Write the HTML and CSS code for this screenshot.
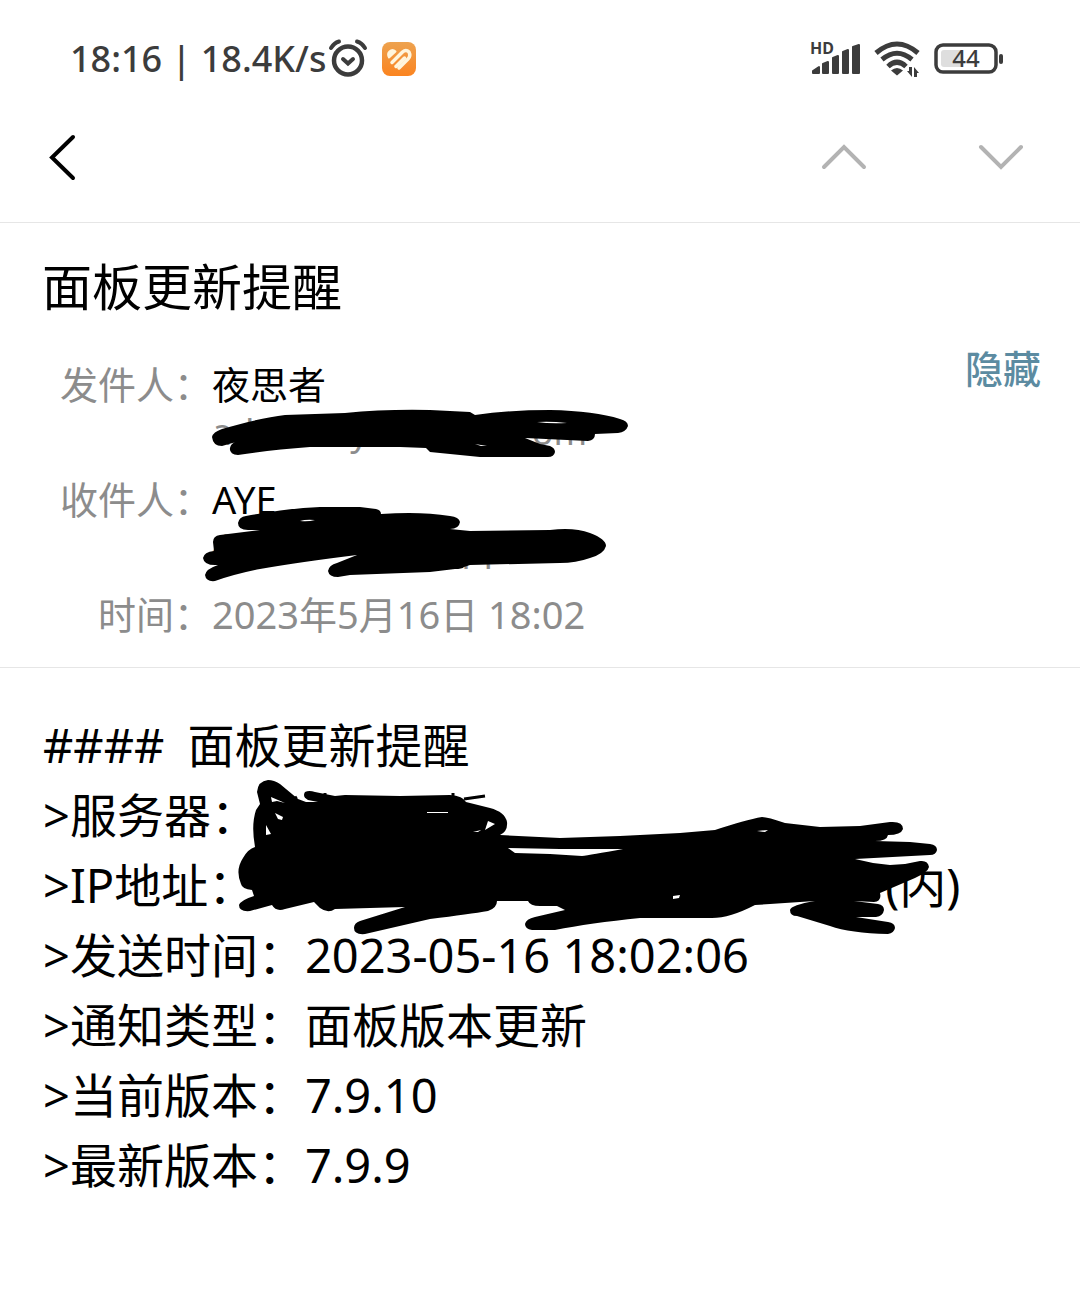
FILE: index.html
```html
<!DOCTYPE html>
<html lang="zh-CN">
<head>
    <meta charset="UTF-8">
    <meta name="viewport" content="width=device-width, initial-scale=1.0">
    <title>面板更新提醒</title>
    <link rel="stylesheet" href="styles.css">
</head>
<body>
    <div class="status-bar">
        <span class="status-text">18:16 | 18.4K/s</span>
        <svg class="alarm" width="40" height="40" viewBox="0 0 40 40" fill="none" stroke="#3c3c3c" stroke-width="4.500" stroke-linecap="round">
            <circle cx="20" cy="21.500" r="14"/>
            <path d="M15 20l5 4.500 5-4.500M3 9q3-5 8-6.500M37 9q-3-5-8-6.500" stroke-width="4"/>
        </svg>
        <svg class="app-badge" width="34" height="34" viewBox="0 0 34 34">
            <defs>
                <linearGradient id="orange" x1="0" y1="0" x2="0" y2="1">
                    <stop offset="0" stop-color="#eda24f"/>
                    <stop offset="1" stop-color="#fb8420"/>
                </linearGradient>
            </defs>
            <rect width="34" height="34" rx="8" fill="url(#orange)"/>
            <g fill="none" stroke="#fff5dc" stroke-width="3.500" stroke-linecap="round" stroke-linejoin="round">
                <path d="M10 20.500L20.500 10Q24 7 27 10Q29 14 26 17L17 26"/>
                <path d="M14 24.500L22.500 16"/>
                <path d="M7 15.500L13.500 9.500Q10.500 6.500 7.500 9.500Q5 12 7 15.500z" fill="#fff5dc" stroke-width="2"/>
            </g>
        </svg>
        <div class="status-icons">
            <svg class="signal" width="52" height="40" viewBox="0 0 52 40" fill="#3c3c3c" stroke="#3c3c3c" stroke-width="2" stroke-linejoin="round">
                <text class="hd" x="0" y="15" stroke="none">HD</text>
                <path d="M3 34v-2l6-4v6zM13 34V25l5-2v11zM23 34V19l5-2v17zM33 34V13l5-2v23zM43 34V8l6-2v28z"/>
            </svg>
            <svg width="48" height="40" viewBox="0 0 48 40" fill="none" stroke="#3c3c3c" stroke-width="5">
                <path d="M2 14Q23-4 44 14M8 20.500Q23 8 38 20.500M14 27.500Q23 19 32 27.500"/>
                <path d="M17 31.500q6-5 12 0l-6 5z" fill="#3c3c3c" stroke="none"/>
                <path d="M35 28h3v10l-5-6h2zM40 38V28l5 6h-2v4z" fill="#3c3c3c" stroke="none"/>
            </svg>
            <svg width="70" height="40" viewBox="0 0 70 40">
                <rect x="2" y="6" width="60" height="27" rx="7" fill="none" stroke="#3c3c3c" stroke-width="3.500"/>
                <rect x="7" y="11" width="22" height="17" rx="3" fill="#dedede"/>
                <rect x="65" y="15" width="4" height="10" rx="2" fill="#3c3c3c"/>
                <text class="battery-level" x="32" y="28" text-anchor="middle">44</text>
            </svg>
        </div>
    </div>

    <nav class="nav-bar">
        <button class="icon-button" aria-label="返回">
            <svg width="30" height="48" viewBox="0 0 30 48" fill="none" stroke="#000" stroke-width="4" stroke-linecap="round"><path d="M25 4L4 24.500L25 45"/></svg>
        </button>
        <div class="nav-arrows">
            <button class="icon-button" aria-label="上一封">
                <svg width="46" height="28" viewBox="0 0 46 28" fill="none" stroke="#b3b3b3" stroke-width="4" stroke-linecap="round"><path d="M3 24L23 4L43 24"/></svg>
            </button>
            <button class="icon-button" aria-label="下一封">
                <svg width="46" height="28" viewBox="0 0 46 28" fill="none" stroke="#b3b3b3" stroke-width="4" stroke-linecap="round"><path d="M3 4L23 24L43 4"/></svg>
            </button>
        </div>
    </nav>

    <header class="mail-header">
        <h1>面板更新提醒</h1>
        <button class="hide-button">隐藏</button>
        <dl class="details">
            <dt>发件人：</dt>
            <dd>
                <div class="name">夜思者</div>
                <div class="address sender"><span>ad</span><span>y</span><span>.com</span></div>
            </dd>
            <dt>收件人：</dt>
            <dd>
                <div class="name">AYE</div>
                <div class="address receiver"><span>4</span><span>qq.com</span></div>
            </dd>
            <dt>时间：</dt>
            <dd class="date">2023年5月16日 18:02</dd>
        </dl>
        <svg class="scribble header-scribble" width="440" height="190" viewBox="200 400 440 190" fill-rule="evenodd" aria-hidden="true">
            <path d="M212 437Q213 432 222 429Q260 418 285 415L345 413Q385 409 430 410L470 412L475 415Q510 410 550 410Q595 411 620 419Q628 421 628 426Q626 432 618 433L595 434Q595 440 588 441L525 438L540 444L550 446Q555 448 555 452Q554 457 548 457L480 457L430 452L426 448L400 447L310 447Q270 450 238 455Q229 454 230 448Q231 443 236 442L222 446Q213 446 212 437ZM537 422Q550 421 567 423Q550 424 537 422ZM475 444L487 446L481 446Z"/>
            <path d="M238 523Q239 517 246 516Q290 508 320 507L360 507L376 509Q381 510 381 514Q420 511 450 516Q459 517 460 522Q459 529 450 529L470 531L550 530Q574 527 590 533Q606 539 606 546Q604 554 590 558Q576 563 560 563L470 565L464 567Q462 569 455 569L430 572L350 575L338 577Q329 577 328 571Q329 565 337 563L357 555Q300 562 260 569Q235 574 215 581Q206 582 205 575Q206 569 218 565Q204 566 203 558Q204 552 214 551L213 542Q213 536 220 535L260 530L248 530Q238 530 238 523ZM300 521Q306 519 315 520Q308 522 300 521Z"/>
        </svg>
    </header>

    <main class="mail-body">
        <p><span class="hashes">####</span>面板更新提醒</p>
        <p>&gt;服务器：</p>
        <p>&gt;IP地址：<span class="hidden-value"></span>(内)</p>
        <p>&gt;发送时间：2023-05-16 18:02:06</p>
        <p>&gt;通知类型：面板版本更新</p>
        <p>&gt;当前版本：7.9.10</p>
        <p>&gt;最新版本：7.9.9</p>
        <svg class="scribble body-scribble" width="720" height="165" viewBox="230 775 720 165" fill-rule="evenodd" aria-hidden="true">
            <path d="M257 792Q258 781 268 780Q274 780 280 784L298 799L306 802L318 802L308 800Q302 797 305 792Q309 790 315 792L335 796L345 795L400 796L450 795Q463 796 466 802L490 808Q505 812 507 822Q508 831 500 835L560 838L620 836L680 833L715 830Q745 820 762 817Q768 817 785 823L820 827L860 826L890 822Q903 821 903 829Q901 835 888 835Q887 841 875 841L910 842L930 844Q937 845 937 850Q936 855 930 855L855 859L873 863L890 865L905 864L920 861Q928 860 929 867Q928 872 915 878L880 893Q882 901 874 902L854 901L878 904Q884 905 884 910Q883 916 876 917L856 917L888 922Q895 923 895 928Q894 933 888 934Q850 933 830 926L797 916Q790 916 790 910Q791 905 815 901L770 904L755 905Q730 918 712 918L640 918Q590 923 555 930L532 930Q525 929 525 924Q526 919 535 917L565 910L557 906L540 906Q530 906 528 901L497 901Q497 908 488 911Q470 914 430 919L365 934Q354 935 354 928Q354 923 360 921L405 907L335 909Q328 914 320 908L314 902L285 909Q276 912 272 905L250 911Q239 912 239 905Q241 900 254 896L252 890Q242 889 241 884Q235 870 243 858Q248 849 255 847Q251 825 256 810L260 804ZM508 848L560 849L623 849Q590 855 582 856L550 854L515 853ZM271 797L285 803L277 801L272 802ZM275 813L283 817L282 820L278 819ZM266 825L271 834L266 835ZM488 821L495 824L485 830ZM427 812L448 812L448 813L427 813ZM473 832L481 830L478 832ZM757 831L768 830L765 832ZM673 896L680 895L679 898L673 899Z"/>
            <path d="M453 793v6M464 799l21-3M290 801l7-4M325 793v5" fill="none" stroke="#000" stroke-width="3"/>
        </svg>
    </main>
</body>
</html>
```
FILE: styles.css
```css
* { box-sizing: border-box; }
body { margin: 0; background: #fff; color: #000; font-family: "Noto Sans", "Noto Sans CJK SC", sans-serif; }
h1, p, dl, dd { margin: 0; }
button { border: none; background: none; padding: 0; font: inherit; cursor: pointer; }
svg { display: block; }

.status-bar { display: flex; align-items: center; height: 118px; padding: 0 76px 0 70px; color: #3c3c3c; }
.status-text { font-size: 36px; font-weight: 500; line-height: 48px; white-space: nowrap; }
.alarm { margin-left: 2px; }
.app-badge { margin-left: 14px; }
.status-icons { display: flex; gap: 12px; margin-left: auto; }
.signal { overflow: visible; }
.hd { font-size: 16px; font-weight: 700; }
.battery-level { font-size: 24px; font-weight: 500; fill: #3c3c3c; }

.nav-bar { display: flex; align-items: center; justify-content: space-between; height: 105px; padding: 0 56px 26px 48px; border-bottom: 1px solid #e6e6e6; }
.nav-arrows { display: flex; gap: 111px; }

.mail-header { position: relative; padding: 34px 39px 28px 42px; border-bottom: 1px solid #e6e6e6; }
.mail-header h1 { font-size: 50px; font-weight: 400; line-height: 60px; }
.hide-button { float: right; margin-top: 27px; color: #5c8ba1; font-size: 38px; font-weight: 500; line-height: 48px; }
.details { display: grid; grid-template-columns: 170px auto; row-gap: 20px; justify-content: start; padding-top: 42px; font-size: 38px; line-height: 50px; }
.details dt { color: #8c8c8c; justify-self: end; white-space: nowrap; }
.address { display: flex; color: #8c8c8c; font-size: 36px; line-height: 45px; }
.sender span:first-child { margin-right: 96px; }
.sender span:last-child { margin-left: 136px; }
.receiver { gap: 216px; }
.date { color: #8c8c8c; }

.mail-body { position: relative; padding: 42px 43px; font-size: 47px; line-height: 70px; }
.hashes { margin-right: 23px; }
.hidden-value { display: inline-block; width: 630px; }

.scribble { position: absolute; pointer-events: none; }
.header-scribble { left: 200px; top: 177px; }
.body-scribble { left: 230px; top: 107px; }
```
